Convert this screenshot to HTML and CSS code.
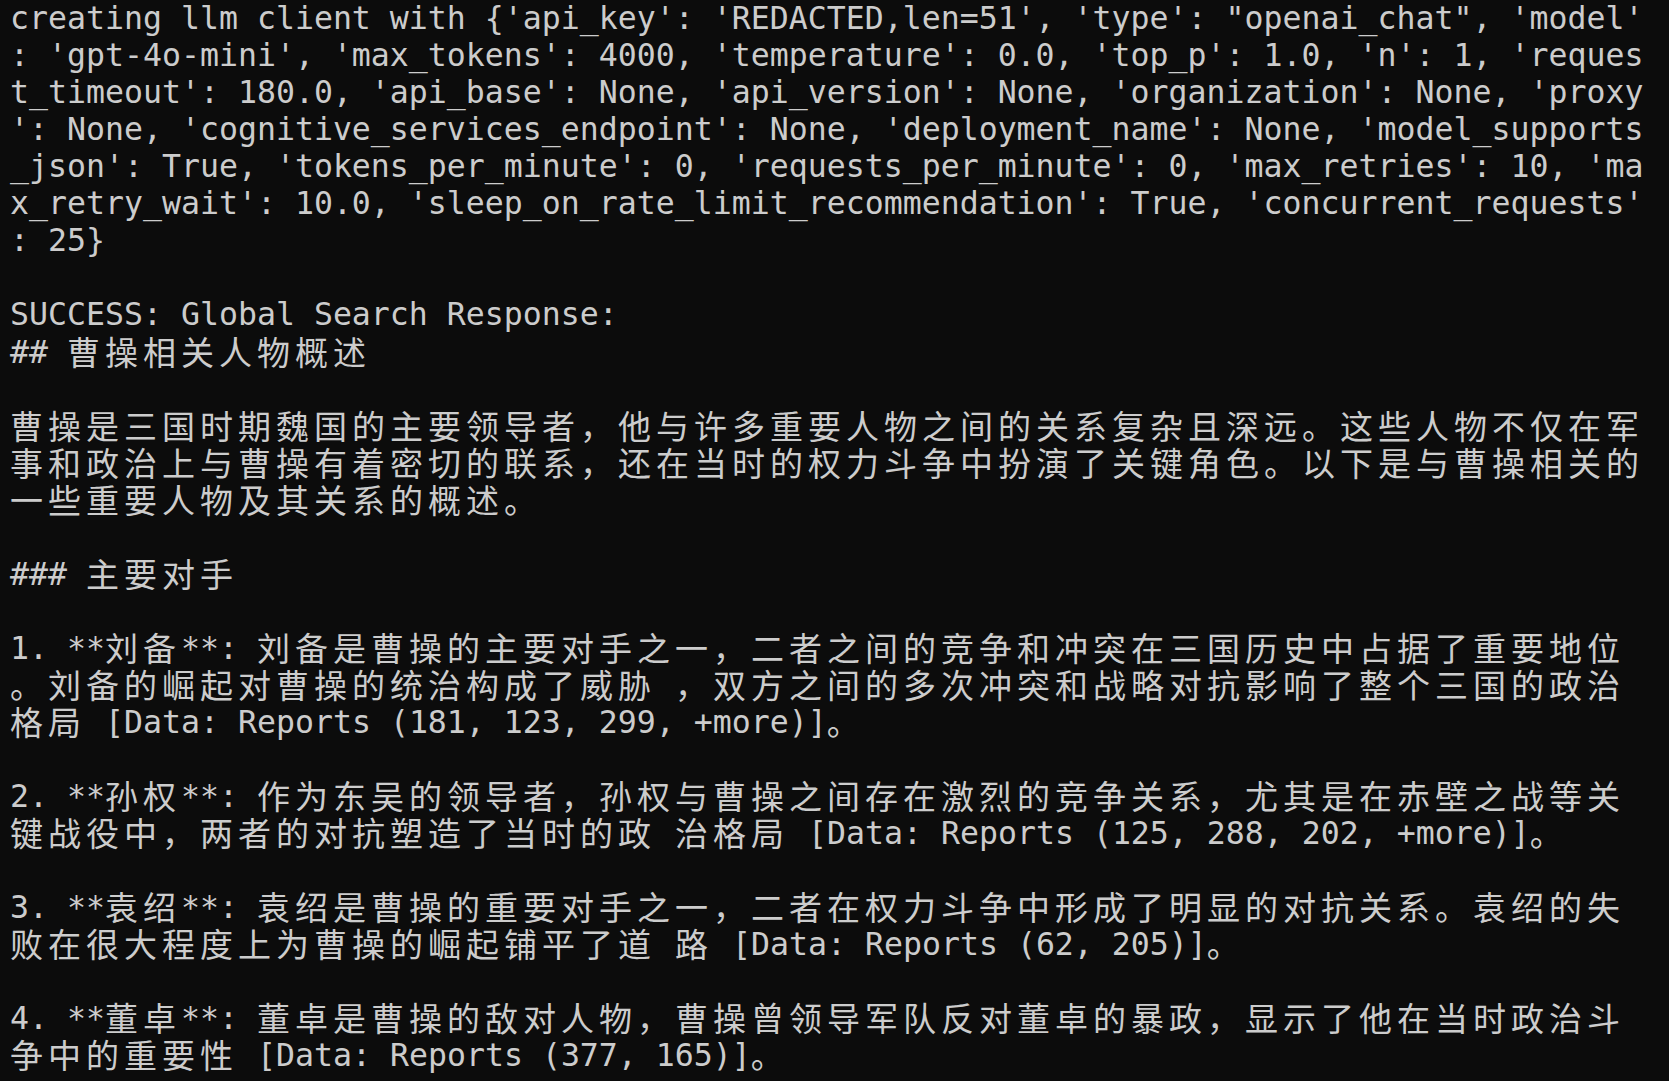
FILE: index.html
```html
<!DOCTYPE html>
<html lang="zh-CN">
<head>
<meta charset="utf-8">
<title>Terminal</title>
<link rel="stylesheet" href="styles.css">
</head>
<body>
<div class="term">
<div class="row">creating llm client with {'api_key': 'REDACTED,len=51', 'type': "openai_chat", 'model'</div>
<div class="row">: 'gpt-4o-mini', 'max_tokens': 4000, 'temperature': 0.0, 'top_p': 1.0, 'n': 1, 'reques</div>
<div class="row">t_timeout': 180.0, 'api_base': None, 'api_version': None, 'organization': None, 'proxy</div>
<div class="row">': None, 'cognitive_services_endpoint': None, 'deployment_name': None, 'model_supports</div>
<div class="row">_json': True, 'tokens_per_minute': 0, 'requests_per_minute': 0, 'max_retries': 10, 'ma</div>
<div class="row">x_retry_wait': 10.0, 'sleep_on_rate_limit_recommendation': True, 'concurrent_requests'</div>
<div class="row">: 25}</div>
<div class="row"></div>
<div class="row">SUCCESS: Global Search Response:</div>
<div class="row">## <span class="w">曹操相关人物概述</span></div>
<div class="row"></div>
<div class="row"><span class="w">曹操是三国时期魏国的主要领导者，他与许多重要人物之间的关系复杂且深远。这些人物不仅在军</span></div>
<div class="row"><span class="w">事和政治上与曹操有着密切的联系，还在当时的权力斗争中扮演了关键角色。以下是与曹操相关的</span></div>
<div class="row"><span class="w">一些重要人物及其关系的概述。</span></div>
<div class="row"></div>
<div class="row">### <span class="w">主要对手</span></div>
<div class="row"></div>
<div class="row">1. **<span class="w">刘备</span>**: <span class="w">刘备是曹操的主要对手之一，二者之间的竞争和冲突在三国历史中占据了重要地位</span></div>
<div class="row"><span class="w">。刘备的崛起对曹操的统治构成了威胁</span> <span class="w">，双方之间的多次冲突和战略对抗影响了整个三国的政治</span></div>
<div class="row"><span class="w">格局</span> [Data: Reports (181, 123, 299, +more)]<span class="w">。</span></div>
<div class="row"></div>
<div class="row">2. **<span class="w">孙权</span>**: <span class="w">作为东吴的领导者，孙权与曹操之间存在激烈的竞争关系，尤其是在赤壁之战等关</span></div>
<div class="row"><span class="w">键战役中，两者的对抗塑造了当时的政</span> <span class="w">治格局</span> [Data: Reports (125, 288, 202, +more)]<span class="w">。</span></div>
<div class="row"></div>
<div class="row">3. **<span class="w">袁绍</span>**: <span class="w">袁绍是曹操的重要对手之一，二者在权力斗争中形成了明显的对抗关系。袁绍的失</span></div>
<div class="row"><span class="w">败在很大程度上为曹操的崛起铺平了道</span> <span class="w">路</span> [Data: Reports (62, 205)]<span class="w">。</span></div>
<div class="row"></div>
<div class="row">4. **<span class="w">董卓</span>**: <span class="w">董卓是曹操的敌对人物，曹操曾领导军队反对董卓的暴政，显示了他在当时政治斗</span></div>
<div class="row"><span class="w">争中的重要性</span> [Data: Reports (377, 165)]<span class="w">。</span></div>
</div>
</body>
</html>
```

FILE: styles.css
```css
html, body {
  margin: 0;
  padding: 0;
  background: #0c0c0c;
}

body {
  width: 1669px;
  height: 1081px;
  overflow: hidden;
}

.term {
  padding: 0 0 0 10px;
  color: #cccccc;
  font-family: "DejaVu Sans Mono", "Liberation Mono", monospace;
  font-size: 31.56px;
  font-kerning: none;
  font-variant-ligatures: none;
  text-spacing-trim: space-all;
}

.row {
  height: 37px;
  line-height: 37px;
  white-space: pre;
  overflow: visible;
}

.w {
  display: inline-block;
  height: 37px;
  font-family: "Noto Sans CJK SC", "Noto Sans CJK JP", sans-serif;
  font-size: 33px;
  letter-spacing: 5px;
  vertical-align: -2px;
  line-height: 37px;
}
```
